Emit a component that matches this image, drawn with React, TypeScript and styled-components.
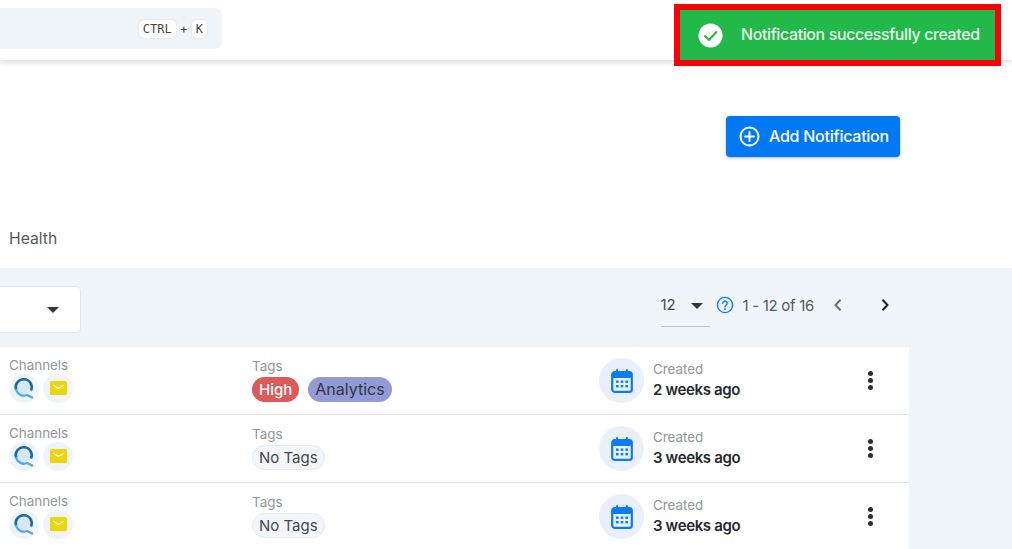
import styled, { createGlobalStyle } from "styled-components";

const rows = [
  { tags: [{ label: "High", kind: "high" }, { label: "Analytics", kind: "analytics" }], created: "2 weeks ago" },
  { tags: [{ label: "No Tags", kind: "empty" }], created: "3 weeks ago" },
  { tags: [{ label: "No Tags", kind: "empty" }], created: "3 weeks ago" },
];

const App = () => {
  return (
    <Page>
      <GlobalStyle />
      <Header>
        <SearchBar>
          <Key>CTRL</Key>
          <Plus>+</Plus>
          <Key>K</Key>
        </SearchBar>
      </Header>
      <Toast>
        <svg width="25" height="25" viewBox="0 0 25 25">
          <circle cx="12.5" cy="12.5" r="12" fill="#fff" />
          <path d="M7 13l4 4 7.5-8" fill="none" stroke="#22b94a" strokeWidth="2" strokeLinecap="round" strokeLinejoin="round" />
        </svg>
        <ToastText>Notification successfully created</ToastText>
      </Toast>
      <ActionRow>
        <AddButton>
          <svg width="21" height="21" viewBox="0 0 21 21">
            <circle cx="10.5" cy="10.5" r="9" fill="none" stroke="#fff" strokeWidth="2" />
            <path d="M10.5 6v9M6 10.5h9" stroke="#fff" strokeWidth="2" strokeLinecap="round" />
          </svg>
          <AddLabel>Add Notification</AddLabel>
        </AddButton>
      </ActionRow>
      <TabRow>Health</TabRow>
      <Band>
        <Toolbar>
          <FilterSelect>
            <Caret />
          </FilterSelect>
          <Pager>
            <PageSize>
              12
              <Caret />
            </PageSize>
            <svg width="18" height="18" viewBox="0 0 18 18">
              <circle cx="9" cy="9" r="7.6" fill="none" stroke="#0b7cf2" strokeWidth="1.4" />
              <path d="M6.8 7.2a2.2 2.2 0 1 1 3.4 1.8c-.8.5-1.2.9-1.2 1.7" fill="none" stroke="#0b7cf2" strokeWidth="1.4" strokeLinecap="round" />
              <circle cx="9" cy="13" r=".9" fill="#0b7cf2" />
            </svg>
            <PageInfo>1 - 12 of 16</PageInfo>
            <PageNav>
              <svg width="16" height="16" viewBox="0 0 16 16">
                <path d="M10.5 2.8L5.5 8l5 5.2" fill="none" stroke="#6b6f73" strokeWidth="2" />
              </svg>
              <svg width="16" height="16" viewBox="0 0 16 16">
                <path d="M5.5 2.8l5 5.2-5 5.2" fill="none" stroke="#1f2328" strokeWidth="2" />
              </svg>
            </PageNav>
          </Pager>
        </Toolbar>
        <List>
          {rows.map((row, i) => (
            <Row key={i}>
              <Cell>
                <Label>Channels</Label>
                <Channels>
                  <ChannelIcon>
                    <svg width="22" height="22" viewBox="0 0 22 22">
                      <circle cx="10.5" cy="10.5" r="6.5" fill="#d5e8f8" />
                      <path d="M3.2 13A8 8 0 1 1 18 13.5" fill="none" stroke="#1f6aa5" strokeWidth="2.6" />
                      <path d="M3.2 13A8 8 0 0 0 14 18l5 2.4" fill="none" stroke="#5aa9e4" strokeWidth="2.4" strokeLinecap="round" />
                    </svg>
                  </ChannelIcon>
                  <ChannelIcon>
                    <svg width="17" height="14" viewBox="0 0 17 14">
                      <rect width="17" height="14" rx="1.5" fill="#ecd60a" />
                      <path d="M3 4l5.5 3.6L14 4" fill="none" stroke="#fff" strokeWidth="1.2" />
                    </svg>
                  </ChannelIcon>
                </Channels>
              </Cell>
              <TagCell>
                <Label>Tags</Label>
                <Tags>
                  {row.tags.map((tag) => (
                    <Tag key={tag.label} $kind={tag.kind}>
                      {tag.label}
                    </Tag>
                  ))}
                </Tags>
              </TagCell>
              <CreatedCell>
                <CalendarBadge>
                  <svg width="22" height="24" viewBox="0 0 22 24">
                    <path d="M6 1v4M16 1v4" stroke="#0b7cf2" strokeWidth="2" strokeLinecap="round" />
                    <rect x="1.2" y="3.2" width="19.6" height="19.6" rx="2.4" fill="none" stroke="#0b7cf2" strokeWidth="2.2" />
                    <rect x="1" y="3" width="20" height="6" rx="2" fill="#0b7cf2" />
                    <g fill="#0b7cf2">
                      <rect x="5" y="11.5" width="2.6" height="2.4" />
                      <rect x="9.7" y="11.5" width="2.6" height="2.4" />
                      <rect x="14.4" y="11.5" width="2.6" height="2.4" />
                      <rect x="5" y="16" width="2.6" height="2.4" />
                      <rect x="9.7" y="16" width="2.6" height="2.4" />
                      <rect x="14.4" y="16" width="2.6" height="2.4" />
                    </g>
                  </svg>
                </CalendarBadge>
                <CreatedText>
                  <Label>Created</Label>
                  <CreatedValue>{row.created}</CreatedValue>
                </CreatedText>
              </CreatedCell>
              <MenuDots>
                <span />
                <span />
                <span />
              </MenuDots>
            </Row>
          ))}
        </List>
      </Band>
    </Page>
  );
};

const GlobalStyle = createGlobalStyle`
  html, body {
    margin: 0;
    padding: 0;
    height: 100%;
    overflow: hidden;
    background: #fff;
  }
`;

const Page = styled.div`
  position: relative;
  width: 1012px;
  height: 549px;
  overflow: hidden;
  display: flex;
  flex-direction: column;
  font-family: Inter, "Noto Sans", sans-serif;
  color: #25292e;
`;

const Header = styled.header`
  height: 60px;
  flex-shrink: 0;
  padding-top: 8px;
  box-sizing: border-box;
  background: #fff;
  box-shadow: 0 2px 6px rgba(0, 0, 0, 0.16);
`;

const SearchBar = styled.div`
  width: 222px;
  height: 41px;
  box-sizing: border-box;
  padding-right: 14px;
  display: flex;
  align-items: center;
  justify-content: flex-end;
  gap: 3px;
  background: #eff4f9;
  border-radius: 0 8px 8px 0;
`;

const Key = styled.span`
  padding: 0 4px;
  height: 18px;
  display: flex;
  align-items: center;
  font-family: "DejaVu Sans Mono", monospace;
  font-size: 12px;
  color: #44484d;
  background: #fff;
  border: 1px solid #e6e8ea;
  border-radius: 6px;
`;

const Plus = styled.span`
  font-size: 12px;
  font-weight: 500;
  color: #44484d;
`;

const Toast = styled.div`
  position: absolute;
  top: 4px;
  left: 674px;
  width: 327px;
  height: 62px;
  box-sizing: border-box;
  border: 6px solid #fb0007;
  background: #22b94a;
  display: flex;
  align-items: center;
  gap: 18px;
  padding-left: 18px;
`;

const ToastText = styled.span`
  font-size: 15.9px;
  font-weight: 500;
  letter-spacing: -0.35px;
  color: #e9f9ee;
  white-space: nowrap;
  padding-bottom: 2px;
`;

const ActionRow = styled.div`
  height: 153px;
  flex-shrink: 0;
  box-sizing: border-box;
  padding: 56px 112px 0 0;
  display: flex;
  justify-content: flex-end;
  align-items: flex-start;
`;

const AddButton = styled.button`
  width: 174px;
  height: 41px;
  padding: 0 0 0 13px;
  display: flex;
  align-items: center;
  gap: 9px;
  border: 0;
  border-radius: 4px;
  background: #0079f2;
  box-shadow: 0 1px 3px rgba(0, 0, 0, 0.3);
  color: #fff;
  font-family: inherit;
  font-size: 16px;
  font-weight: 500;
  white-space: nowrap;
`;

const AddLabel = styled.span`
  letter-spacing: -0.25px;
  padding-bottom: 2px;
`;

const TabRow = styled.div`
  height: 55px;
  flex-shrink: 0;
  box-sizing: border-box;
  padding: 17px 0 0 9px;
  font-size: 15.7px;
  line-height: 18px;
  color: #55595e;
`;

const Band = styled.section`
  flex: 1;
  background: #f0f5f9;
  padding-top: 18px;
`;

const Toolbar = styled.div`
  height: 47px;
  margin-bottom: 14px;
  width: 893px;
  display: flex;
  justify-content: space-between;
  align-items: flex-start;
`;

const FilterSelect = styled.div`
  width: 81px;
  height: 47px;
  box-sizing: border-box;
  padding-right: 21px;
  display: flex;
  align-items: center;
  justify-content: flex-end;
  background: #fff;
  border: 1px solid #e2e6ea;
  border-left: 0;
  border-radius: 0 5px 5px 0;
`;

const Caret = styled.span`
  width: 0;
  height: 0;
  border-left: 6px solid transparent;
  border-right: 6px solid transparent;
  border-top: 6px solid #33373b;
`;

const Pager = styled.div`
  display: flex;
  align-items: center;
  gap: 6px;
  height: 38px;
`;

const PageSize = styled.div`
  width: 49px;
  height: 41px;
  margin-top: 3px;
  box-sizing: border-box;
  padding: 10px 7px 0 0;
  display: flex;
  align-items: flex-start;
  justify-content: space-between;
  font-size: 15px;
  line-height: 18px;
  color: #44484d;
  border-bottom: 1px solid #bcc0c4;

  span {
    margin-top: 7px;
  }
`;

const PageInfo = styled.span`
  font-size: 15px;
  letter-spacing: -0.3px;
  color: #55595e;
  white-space: nowrap;
  margin-left: 3px;
`;

const PageNav = styled.div`
  display: flex;
  align-items: center;
  gap: 31px;
  margin-left: 10px;
`;

const List = styled.div`
  width: 909px;
  background: #fff;
`;

const Row = styled.div`
  height: 68px;
  box-sizing: border-box;
  display: grid;
  grid-template-columns: 243px 347px 271px 1fr;
  align-items: center;
  padding-left: 9px;
  border-bottom: 1px solid #e4e6e8;
`;

const Cell = styled.div`
  display: flex;
  flex-direction: column;
  gap: 1px;
  margin-top: -2px;
`;

const TagCell = styled(Cell)`
  gap: 3px;
  margin-top: -2px;
`;

const Label = styled.span`
  font-size: 13.4px;
  line-height: 16px;
  color: #939699;
`;

const Channels = styled.div`
  display: flex;
  gap: 4px;
`;

const ChannelIcon = styled.span`
  width: 30px;
  height: 29px;
  border-radius: 50%;
  background: #eff4f9;
  display: flex;
  align-items: center;
  justify-content: center;
`;

const Tags = styled.div`
  display: flex;
  gap: 9px;
`;

const tagColors: Record<string, string> = {
  high: "background: #dd5a5b; color: #fff; font-weight: 500;",
  analytics: "background: #929bd6; color: #33373e; font-size: 16px;",
  empty: "background: #f3f6fa; color: #44484d; border: 1px solid #e4ebf3; padding: 0 6px;",
};

const Tag = styled.span<{ $kind: string }>`
  height: 25px;
  box-sizing: border-box;
  padding: 0 7px;
  display: flex;
  align-items: center;
  border-radius: 13px;
  font-size: 15px;
  ${({ $kind }) => tagColors[$kind]}
`;

const CreatedCell = styled.div`
  display: flex;
  align-items: center;
  gap: 9px;
`;

const CalendarBadge = styled.span`
  width: 45px;
  height: 45px;
  border-radius: 50%;
  background: #e9f0fc;
  display: flex;
  align-items: center;
  justify-content: center;
`;

const CreatedText = styled.div`
  display: flex;
  flex-direction: column;
  gap: 4px;
  margin-top: -1px;
`;

const CreatedValue = styled.span`
  font-size: 15px;
  line-height: 18px;
  font-weight: 600;
  letter-spacing: -0.35px;
  color: #25292e;
`;

const MenuDots = styled.div`
  display: flex;
  flex-direction: column;
  gap: 2px;
  margin-left: -2px;

  span {
    width: 5px;
    height: 5px;
    border-radius: 50%;
    background: #2b2f33;
  }
`;

export default App;
